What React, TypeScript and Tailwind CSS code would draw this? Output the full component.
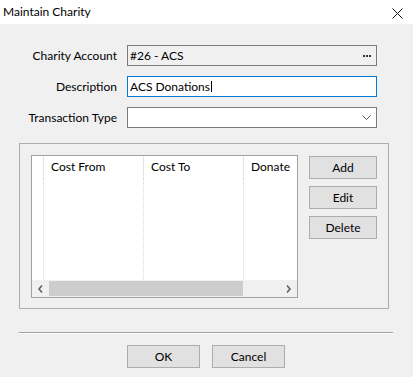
import React from 'react';

const font = { fontFamily: '"Segoe UI", Lato, "Liberation Sans", sans-serif' };

const Dots = () => (
  <div className="flex gap-[1px]">
    <div className="w-[2px] h-[2px] bg-[#333]" />
    <div className="w-[2px] h-[2px] bg-[#333]" />
    <div className="w-[2px] h-[2px] bg-[#333]" />
  </div>
);

const Btn = ({ label, w }: { label: string; w: string }) => (
  <button className={`${w} h-[23px] bg-[#e1e1e1] border border-[#adadad] text-[12px] text-black flex items-center justify-center`}>
    {label}
  </button>
);

export default function App() {
  const columns = [
    { title: '', width: 'w-[11px]' },
    { title: 'Cost From', width: 'w-[100px]' },
    { title: 'Cost To', width: 'w-[100px]' },
    { title: 'Donate', width: 'w-[60px]' },
  ];

  return (
    <div className="w-[413px] h-[377px] bg-[#f0f0f0] flex flex-col text-black text-[12px]" style={font}>
      {/* title bar */}
      <div className="h-[24px] bg-white flex items-center justify-between pl-[3px] pr-[10px]">
        <span className="text-[12px]">Maintain Charity</span>
        <svg width="11" height="11" viewBox="0 0 11 11" className="mt-[2px]">
          <path d="M0.5 0.5 L10.5 10.5 M10.5 0.5 L0.5 10.5" stroke="#111" strokeWidth="1" />
        </svg>
      </div>

      <div className="px-[19px] pt-[21px] flex flex-col">
        {/* fields */}
        <div className="grid grid-cols-[98px_250px] gap-x-[10px] gap-y-[10px] items-center">
          <span className="text-right">Charity Account</span>
          <div className="h-[21px] border border-[#7a7a7a] bg-[#f0f0f0] flex items-center justify-between pl-[2px] pr-[5px]">
            <span>#26 - ACS</span>
            <Dots />
          </div>

          <span className="text-right">Description</span>
          <div className="h-[21px] border border-[#0078d7] bg-white flex items-center pl-[2px]">
            <span>ACS Donations</span>
            <span className="w-[1px] h-[11px] bg-black ml-[1px]" />
          </div>

          <span className="text-right">Transaction Type</span>
          <div className="h-[21px] border border-[#7a7a7a] bg-white flex items-center justify-end pr-[5px]">
            <svg width="9" height="5" viewBox="0 0 9 5">
              <path d="M0.5 0.5 L4.5 4.5 L8.5 0.5" stroke="#555" strokeWidth="1" fill="none" />
            </svg>
          </div>
        </div>

        {/* group box */}
        <div className="mt-[15px] w-[370px] h-[166px] border border-[#adadad] flex gap-[11px] pl-[11px] pt-[11px]">
          <div className="w-[267px] h-[143px] border border-[#a0a0a0] bg-white flex flex-col">
            <div className="flex-1 flex overflow-hidden">
              {columns.map((c, i) => (
                <div key={i} className={`${c.width} shrink-0 flex flex-col`}>
                  <div className={`h-[22px] flex items-center pl-[7px] whitespace-nowrap ${i > 0 ? 'border-l border-[#e5e5e5]' : ''}`}>
                    {c.title}
                  </div>
                  <div className={`flex-1 ${i > 0 ? 'border-l border-dotted border-[#d9d9d9]' : ''}`} />
                </div>
              ))}
            </div>
            {/* horizontal scrollbar */}
            <div className="h-[17px] bg-[#f0f0f0] flex items-center">
              <div className="w-[17px] h-full flex items-center justify-center">
                <svg width="5" height="8" viewBox="0 0 5 8">
                  <path d="M4 0.5 L1 4 L4 7.5" stroke="#606060" strokeWidth="1.6" fill="none" />
                </svg>
              </div>
              <div className="w-[194px] h-[15px] bg-[#cdcdcd]" />
              <div className="flex-1" />
              <div className="w-[17px] h-full flex items-center justify-center">
                <svg width="5" height="8" viewBox="0 0 5 8">
                  <path d="M1 0.5 L4 4 L1 7.5" stroke="#606060" strokeWidth="1.6" fill="none" />
                </svg>
              </div>
            </div>
          </div>

          <div className="flex flex-col gap-[7px] pt-[1px]">
            <Btn label="Add" w="w-[68px]" />
            <Btn label="Edit" w="w-[68px]" />
            <Btn label="Delete" w="w-[68px]" />
          </div>
        </div>

        {/* separator */}
        <div className="mt-[23px] w-[374px] border-t border-[#a0a0a0] border-b border-b-white" />

        <div className="mt-[11px] flex gap-[12px] pl-[108px]">
          <Btn label="OK" w="w-[73px]" />
          <Btn label="Cancel" w="w-[73px]" />
        </div>
      </div>
    </div>
  );
}
